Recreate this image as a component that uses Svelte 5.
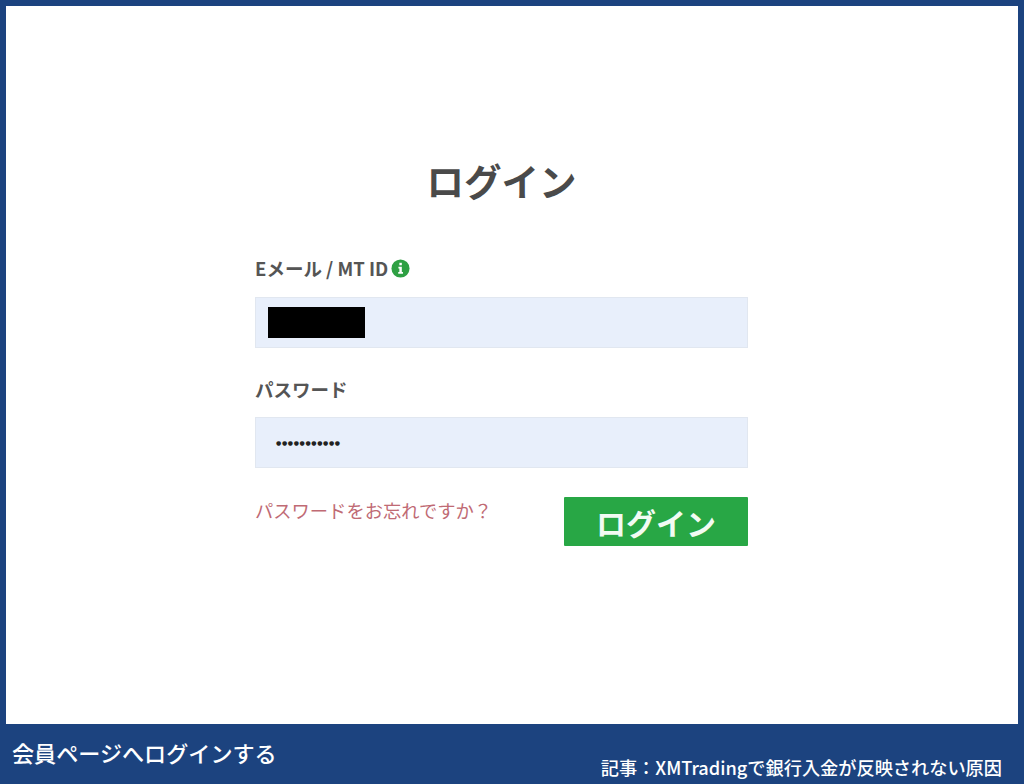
<script>
  let email = "";
  let password = "●●●●●●●●●●●";
</script>

<div class="frame">
  <main class="panel">
    <h1>ログイン</h1>
    <form class="form" onsubmit={(e) => e.preventDefault()}>
      <div class="label-row">
        <label for="email">Eメール / MT ID</label>
        <svg class="info" viewBox="0 0 20 20" width="19" height="19" aria-hidden="true">
          <circle cx="10" cy="10" r="9.5" fill="#2ea043" />
          <rect x="8.8" y="4" width="2.6" height="2.6" fill="#fff" />
          <path d="M7.8 8.2h3.6v5.6h1.2v1.8H7.6v-1.8h1.2V10H7.8z" fill="#fff" />
        </svg>
      </div>
      <div class="field">
        <span class="redacted"></span>
        <input id="email" type="text" bind:value={email} />
      </div>

      <label class="password-label" for="password">パスワード</label>
      <div class="field">
        <span class="dots" id="password">{password}</span>
      </div>

      <div class="actions">
        <a href="#forgot">パスワードをお忘れですか？</a>
        <button type="submit">ログイン</button>
      </div>
    </form>
  </main>
  <footer class="caption">
    <span class="caption-title">会員ページへログインする</span>
    <span class="caption-link">記事：XMTradingで銀行入金が反映されない原因</span>
  </footer>
</div>

<style>
  :global(body) {
    margin: 0;
  }
  .frame {
    width: 1024px;
    height: 784px;
    box-sizing: border-box;
    display: flex;
    flex-direction: column;
    background: #1c437f;
    padding: 6px 6px 0;
    font-family: "Noto Sans CJK JP", "Liberation Sans", sans-serif;
  }
  .panel {
    height: 718px;
    background: #fff;
    display: flex;
    flex-direction: column;
    padding: 151px 0 0 249px;
    box-sizing: border-box;
  }
  h1 {
    width: 493px;
    margin: 0;
    font-size: 37.5px;
    line-height: 46px;
    font-weight: 700;
    text-align: center;
    color: #4a4a4a;
  }
  .form {
    width: 493px;
    padding-top: 55px;
    display: flex;
    flex-direction: column;
  }
  .label-row {
    display: flex;
    align-items: center;
    gap: 3px;
    height: 20px;
    margin-bottom: 19px;
  }
  label {
    font-size: 18.5px;
    line-height: 24px;
    font-weight: 700;
    color: #555;
  }
  .info {
    flex: none;
  }
  .field {
    height: 51px;
    box-sizing: border-box;
    background: #e8effb;
    border: 1px solid #e1e7f0;
    display: flex;
    align-items: center;
    padding-left: 12px;
  }
  .field input {
    flex: 1;
    min-width: 0;
    border: none;
    background: transparent;
    outline: none;
  }
  .redacted {
    width: 97px;
    height: 31px;
    background: #000;
    flex: none;
  }
  .password-label {
    margin-top: 29px;
    margin-bottom: 16px;
  }
  .dots {
    font-family: "DejaVu Sans", sans-serif;
    font-size: 6px;
    letter-spacing: 0.65px;
    color: #222;
    padding-left: 8px;
  }
  .actions {
    display: flex;
    justify-content: space-between;
    align-items: flex-start;
    margin-top: 29px;
  }
  a {
    font-size: 18.3px;
    line-height: 26px;
    color: #c06a74;
    text-decoration: none;
  }
  button {
    width: 184px;
    height: 49px;
    border: none;
    border-radius: 1px;
    background: #28a745;
    color: #f2fbf3;
    font-family: inherit;
    font-size: 30px;
    font-weight: 700;
    line-height: 1;
    padding: 0;
  }
  .caption {
    flex: 1;
    margin: 0 -6px;
    display: flex;
    justify-content: space-between;
    padding: 0 22px 0 12px;
    color: #fff;
    font-weight: 500;
  }
  .caption-title {
    font-size: 22.1px;
    line-height: 32px;
    margin-top: 12px;
  }
  .caption-link {
    font-size: 18.2px;
    line-height: 24px;
    margin-top: 31px;
  }
</style>
